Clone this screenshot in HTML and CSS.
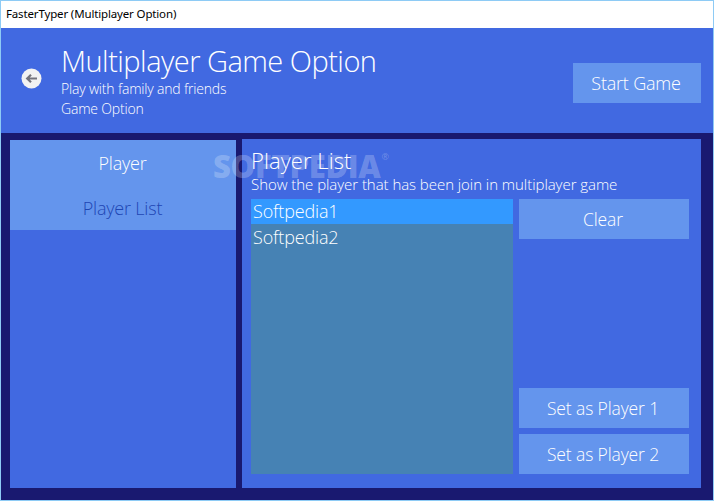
FILE: index.html
```html
<!DOCTYPE html>
<html lang="en">
<head>
<meta charset="utf-8">
<title>FasterTyper (Multiplayer Option)</title>
<link rel="stylesheet" href="styles.css">
</head>
<body>
<div class="window">
  <div class="titlebar">FasterTyper (Multiplayer Option)</div>
  <header class="header">
    <svg class="back" width="21" height="21" viewBox="0 0 21 21" aria-hidden="true">
      <circle cx="10.5" cy="10.5" r="10" fill="#f2f2f2"/>
      <path d="M16 10.5H6.5M10 6.8 6.2 10.5l3.8 3.7" fill="none" stroke="#74747c" stroke-width="2.2"/>
    </svg>
    <div class="heading">
      <h1 class="title">Multiplayer Game Option</h1>
      <p class="subtitle">Play with family and friends</p>
      <p class="subtitle">Game Option</p>
    </div>
    <button class="btn btn-start">Start Game</button>
  </header>
  <main class="content">
    <nav class="sidebar">
      <div class="tabs">
        <div class="tab">Player</div>
        <div class="tab tab-active">Player List</div>
      </div>
    </nav>
    <section class="panel">
      <h2 class="panel-title">Player List</h2>
      <p class="panel-desc">Show the player that has been join in multiplayer game</p>
      <div class="panel-body">
        <ul class="list">
          <li class="item item-selected">Softpedia1</li>
          <li class="item">Softpedia2</li>
        </ul>
        <div class="actions">
          <button class="btn btn-action">Clear</button>
          <div class="actions-bottom">
            <button class="btn btn-action">Set as Player 1</button>
            <button class="btn btn-action">Set as Player 2</button>
          </div>
        </div>
      </div>
    </section>
  </main>
  <div class="watermark">SOFTPEDIA<sup class="reg">®</sup></div>
</div>
</body>
</html>
```
FILE: styles.css
```css
* { box-sizing: border-box; }
html, body { margin: 0; padding: 0; }
body { width: 714px; height: 501px; overflow: hidden; font-family: "Open Sans", "Noto Sans", sans-serif; font-weight: 300; }
.window { position: relative; width: 714px; height: 501px; display: flex; flex-direction: column; border: 1px solid #8ecbf5; background: #191970; color: #fff; }
.titlebar { height: 27px; flex: none; background: #fff; color: #000; font-family: "Noto Sans", sans-serif; font-weight: 400; font-size: 11.5px; line-height: 26px; padding-left: 5px; letter-spacing: -.15px; }
.header { height: 105px; flex: none; background: #4169e1; display: flex; align-items: flex-start; position: relative; }
.back { flex: none; margin: 40px 0 0 20px; }
.heading { margin-left: 19px; padding-top: 15px; flex: 1; }
.title { margin: 0; font-size: 29px; font-weight: 300; line-height: 36px; letter-spacing: -.52px; }
.subtitle { margin: 0; font-size: 14px; line-height: 20px; letter-spacing: -.18px; }
.btn { display: block; border: 0; padding: 0; background: #6495ed; color: #fff; font-family: inherit; font-weight: 300; font-size: 18px; text-align: center; }
.btn-start { width: 128px; height: 40px; margin: 35px 12px 0 0; padding-right: 2px; flex: none; letter-spacing: -.2px; }
.content { flex: 1; display: flex; align-items: flex-start; padding: 6px 12px 12px 9px; gap: 6px; }
.sidebar { width: 226px; height: 348px; margin-top: 1px; background: #4169e1; }
.tabs { background: #6495ed; height: 90px; }
.tab { height: 45px; text-align: center; font-size: 18px; line-height: 47px; letter-spacing: -.2px; padding-right: 1px; }
.tab-active { color: #1e46b4; }
.panel { width: 459px; height: 349px; background: #4169e1; padding: 8px 12px 14px 9px; display: flex; flex-direction: column; }
.panel-title { margin: 0; font-size: 22px; font-weight: 300; line-height: 27px; letter-spacing: .05px; }
.panel-desc { margin: 0; font-size: 15px; line-height: 21px; letter-spacing: -.05px; height: 25px; }
.panel-body { flex: 1; display: flex; gap: 6px; }
.list { width: 262px; margin: 0; padding: 0; list-style: none; background: #4682b4; }
.item { height: 25px; padding-left: 2px; font-size: 18px; line-height: 27px; letter-spacing: -.15px; }
.item-selected { background: #3399ff; line-height: 25px; }
.actions { flex: 1; width: 170px; display: flex; flex-direction: column; justify-content: space-between; }
.actions-bottom { display: flex; flex-direction: column; gap: 6px; }
.btn-action { width: 170px; height: 40px; font-size: 17.5px; padding: 0 2px 1px 0; letter-spacing: -.12px; }
.watermark { position: absolute; left: 212px; top: 147px; font-family: "Open Sans", sans-serif; font-weight: 800; font-size: 31px; line-height: 36px; color: rgba(255,255,255,.24); letter-spacing: -.3px; pointer-events: none; }
.reg { font-size: 9px; font-weight: 400; vertical-align: top; line-height: 18px; margin-left: 1px; }
```
